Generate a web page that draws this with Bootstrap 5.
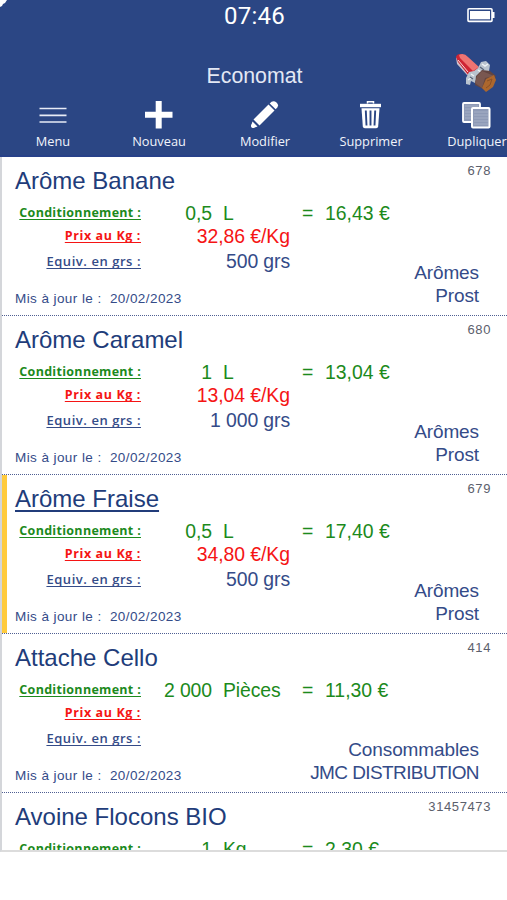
<!DOCTYPE html>
<html lang="fr">
<head>
<meta charset="utf-8">
<meta name="viewport" content="width=device-width, initial-scale=1">
<title>Economat</title>
<link href="https://cdn.jsdelivr.net/npm/bootstrap@5.3.0/dist/css/bootstrap.min.css" rel="stylesheet">
<style>
  body { font-family: "Liberation Sans", Arial, sans-serif; height: 900px; color: #344b88; }
  .app-head { height: 157px; background: #2b4684; border-bottom: 2px solid #274189; }
  .corner { left: 0; top: 0; }
  .status { height: 46px; }
  .clock { font-family: Roboto, sans-serif; font-size: 24px; line-height: 33px; letter-spacing: .2px; padding-left: 2px; }
  .battery { right: 12px; top: 7px; }
  .app-title { font-size: 21.3px; line-height: 60px; height: 54px; padding-left: 2px; color: #e3e8f4; }
  .lipstick { right: 9px; top: 6px; }
  .tool { flex: 0 0 106px; font: 500 12.8px/16px "Open Sans", sans-serif; color: #f1f4fb; }
  .tool svg { display: block; margin-bottom: 3px; }
  .items { height: 695px; border-left: 2px solid #d4d6da; border-bottom: 2px solid #dcdcdc; }
  .item { display: grid; height: 159px; flex: none;
    grid-template-columns: 139px 71px 90px 23px 154px 1fr;
    grid-template-rows: 44px 23px 23px 27px 1fr;
    border-bottom: 1px dotted #4f5f92; font-size: 19.4px; line-height: 24px; }
  .item.selected { box-shadow: inset 5px 0 #ffcb3d; }
  .item.selected .name { text-decoration: underline; text-decoration-thickness: 1.5px; text-underline-offset: 3px; }
  .name { grid-area: 1 / 1 / 2 / 6; padding: 8px 0 0 13px; font-size: 24px; line-height: 32px; color: #213c7a; }
  .code { grid-area: 1 / 5 / 2 / 7; padding-right: 16px; font-size: 13px; line-height: 27px; color: #5b606c; letter-spacing: .6px; }
  .lbl { grid-column: 1; font: 700 12.5px/24px "Open Sans", sans-serif; text-align: right; text-decoration: underline; text-decoration-skip-ink: none; text-underline-offset: 2px; white-space: nowrap; }
  .cond { grid-row: 2; color: #1c8a1c; }
  .prix { grid-row: 3; color: #f51414; }
  .equiv { grid-row: 4; }
  .lbl.cond { letter-spacing: .3px; }
  .lbl.prix { letter-spacing: .6px; }
  .lbl.equiv { font-weight: 600; font-size: 13px; letter-spacing: .55px; padding-top: 2px; }
  .qty { grid-column: 2; text-align: right; letter-spacing: -.1px; }
  .unit { grid-column: 3; padding-left: 11px; letter-spacing: -.1px; }
  .eq { grid-column: 4; }
  .total { grid-column: 5; }
  .wide { grid-column: 2 / 4; text-align: right; padding-right: 12px; }
  .prix.wide { letter-spacing: -.05px; }
  .equiv.wide { padding-top: 2px; letter-spacing: -.1px; }
  .date { grid-area: 5 / 1 / 6 / 4; padding: 13px 0 0 13px; font-size: 13.5px; line-height: 24px; letter-spacing: .42px; }
  .origin { grid-area: 4 / 3 / 6 / 6; justify-self: end; text-align: right; padding-top: 14px; font-size: 19px; line-height: 23px; letter-spacing: -.1px; }
  .tight { letter-spacing: -.6px; }
</style>
<script src="https://cdn.jsdelivr.net/npm/bootstrap@5.3.0/dist/js/bootstrap.bundle.min.js"></script>
</head>
<body class="bg-white overflow-hidden">
<header class="app-head position-relative overflow-hidden text-white">
  <svg class="corner position-absolute" width="7" height="7"><path d="M0 0H7L5 3 3 4 2 6 0 7Z" fill="#fff"/></svg>
  <div class="status position-relative text-center">
    <span class="clock">07:46</span>
    <svg class="battery position-absolute" width="28" height="16" viewBox="0 0 28 16"><rect x="1" y="1.800" width="24" height="12.600" rx="1" fill="none" stroke="#fff" stroke-width="1.600"/><rect x="3" y="4" width="20" height="8.300" fill="#fff"/><path d="M25 5h2.500v6H25z" fill="#fff"/></svg>
  </div>
  <div class="app-title position-relative text-center">Economat
    <svg class="lipstick position-absolute" width="44" height="42" viewBox="0 0 44 42">
      <path d="M2 5L3 12 13 23 17 22Z" fill="#cfc3cc"/>
      <path d="M2 5Q3 1.500 7 2L11 4 25 16 15 24 4 10Z" fill="#cf2434"/>
      <path d="M5 3Q10 .500 14 5L25 15 19 19 6 6Z" fill="#ef7472"/>
      <path d="M4 8L14 20" stroke="#f6dede" stroke-width="1"/>
      <path d="M24 16L27 10 32 9 36 13 35 19 29 20 23 25 21 31 17 29 16 33 12 32 12 26 15 20 20 19Z" fill="#b9c3cf"/>
      <path d="M28 12l3 2 3-2M17 22l3 2M14 28l3-2M24 18l3 2" stroke="#eef2f5" stroke-width="1.500" fill="none"/>
      <path d="M26 15l4 3M16 25l3 2" stroke="#586579" stroke-width="1.300"/>
      <path d="M28 18L36 19 42 24 33 39 21 33 22 24Z" fill="#624541"/>
      <path d="M28 19L40 24 31 26 28 36 21 31 23 24Z" fill="#795750"/>
      <path d="M32 27L40 23 42 28 39 35 32 40 28 36Z" fill="#ad672d"/>
      <path d="M33 29l5-2-2 6-4 3" fill="none" stroke="#8a5027"/>
    </svg>
  </div>
  <nav class="d-flex flex-nowrap" aria-label="Actions">
    <div class="tool d-flex flex-column align-items-center"><svg width="30" height="30" viewBox="0 0 30 30"><path d="M1.500 8.500h27M1.500 15.300h27M1.500 22h27" stroke="#e8ecf6" stroke-width="1.700"/></svg>Menu</div>
    <div class="tool d-flex flex-column align-items-center"><svg width="30" height="30" viewBox="0 0 30 30"><path d="M1 14.800h27.500M14.700 1v27.500" stroke="#fff" stroke-width="6"/></svg>Nouveau</div>
    <div class="tool d-flex flex-column align-items-center"><svg width="30" height="30" viewBox="0 0 30 30"><g fill="#fff"><path d="M18.500 4.500L24.500 10.500 9.500 25.500 3.500 19.500Z"/><circle cx="3" cy="26" r="2"/><path d="M2.500 21.500L7.500 26.500 3 28 1 26Z"/><path d="M19.700 3.400Q23-.500 26.500 2.500 30 6 25.700 9.300Z"/></g></svg>Modifier</div>
    <div class="tool d-flex flex-column align-items-center"><svg width="30" height="30" viewBox="0 0 30 30"><path d="M11.500 3.500V1.800h6v1.700" fill="none" stroke="#fff" stroke-width="1.500"/><path d="M4 3.800h21v3.400H4z" fill="#fff"/><path d="M5.500 8.300h18l-1.300 18q-.2 2-2 2H8.800q-1.800 0-2-2z" fill="#fff"/><path d="M9.800 10.500l.7 15M14.500 10.500v15M19.200 10.500l-.7 15" stroke="#2b4684" stroke-width="1.900"/></svg>Supprimer</div>
    <div class="tool d-flex flex-column align-items-center"><svg width="30" height="30" viewBox="0 0 30 30"><rect x="1" y="3" width="17" height="19" rx="1" fill="#8e9ab6" stroke="#fff" stroke-width="1.800"/><path d="M3 6h13M3 9h13M3 12h13M3 15h13M3 18h13" stroke="#a5afc6"/><rect x="10" y="8" width="17.500" height="19.500" rx="1" fill="#8e9ab6" stroke="#fff" stroke-width="2"/><path d="M12 12h14M12 15h14M12 18h14M12 21h14M12 24h14" stroke="#a5afc6"/></svg>Dupliquer</div>
  </nav>
</header>

<main class="items d-flex flex-column overflow-hidden">
  <article class="item">
    <div class="name">Arôme Banane</div><div class="code text-end">678</div>
    <div class="lbl cond">Conditionnement :</div><div class="cond qty">0,5</div><div class="cond unit">L</div><div class="cond eq">=</div><div class="cond total">16,43 €</div>
    <div class="lbl prix">Prix au Kg :</div><div class="prix wide">32,86 €/Kg</div>
    <div class="lbl equiv">Equiv. en grs :</div><div class="equiv wide">500 grs</div>
    <div class="date">Mis à jour le :&nbsp; 20/02/2023</div>
    <div class="origin"><div>Arômes</div><div>Prost</div></div>
  </article>
  <article class="item">
    <div class="name">Arôme Caramel</div><div class="code text-end">680</div>
    <div class="lbl cond">Conditionnement :</div><div class="cond qty">1</div><div class="cond unit">L</div><div class="cond eq">=</div><div class="cond total">13,04 €</div>
    <div class="lbl prix">Prix au Kg :</div><div class="prix wide">13,04 €/Kg</div>
    <div class="lbl equiv">Equiv. en grs :</div><div class="equiv wide">1 000 grs</div>
    <div class="date">Mis à jour le :&nbsp; 20/02/2023</div>
    <div class="origin"><div>Arômes</div><div>Prost</div></div>
  </article>
  <article class="item selected">
    <div class="name">Arôme Fraise</div><div class="code text-end">679</div>
    <div class="lbl cond">Conditionnement :</div><div class="cond qty">0,5</div><div class="cond unit">L</div><div class="cond eq">=</div><div class="cond total">17,40 €</div>
    <div class="lbl prix">Prix au Kg :</div><div class="prix wide">34,80 €/Kg</div>
    <div class="lbl equiv">Equiv. en grs :</div><div class="equiv wide">500 grs</div>
    <div class="date">Mis à jour le :&nbsp; 20/02/2023</div>
    <div class="origin"><div>Arômes</div><div>Prost</div></div>
  </article>
  <article class="item">
    <div class="name">Attache Cello</div><div class="code text-end">414</div>
    <div class="lbl cond">Conditionnement :</div><div class="cond qty">2 000</div><div class="cond unit">Pièces</div><div class="cond eq">=</div><div class="cond total">11,30 €</div>
    <div class="lbl prix">Prix au Kg :</div>
    <div class="lbl equiv">Equiv. en grs :</div>
    <div class="date">Mis à jour le :&nbsp; 20/02/2023</div>
    <div class="origin"><div>Consommables</div><div class="tight">JMC DISTRIBUTION</div></div>
  </article>
  <article class="item">
    <div class="name">Avoine Flocons BIO</div><div class="code text-end">31457473</div>
    <div class="lbl cond">Conditionnement :</div><div class="cond qty">1</div><div class="cond unit">Kg</div><div class="cond eq">=</div><div class="cond total">2,30 €</div>
  </article>
</main>
</body>
</html>
